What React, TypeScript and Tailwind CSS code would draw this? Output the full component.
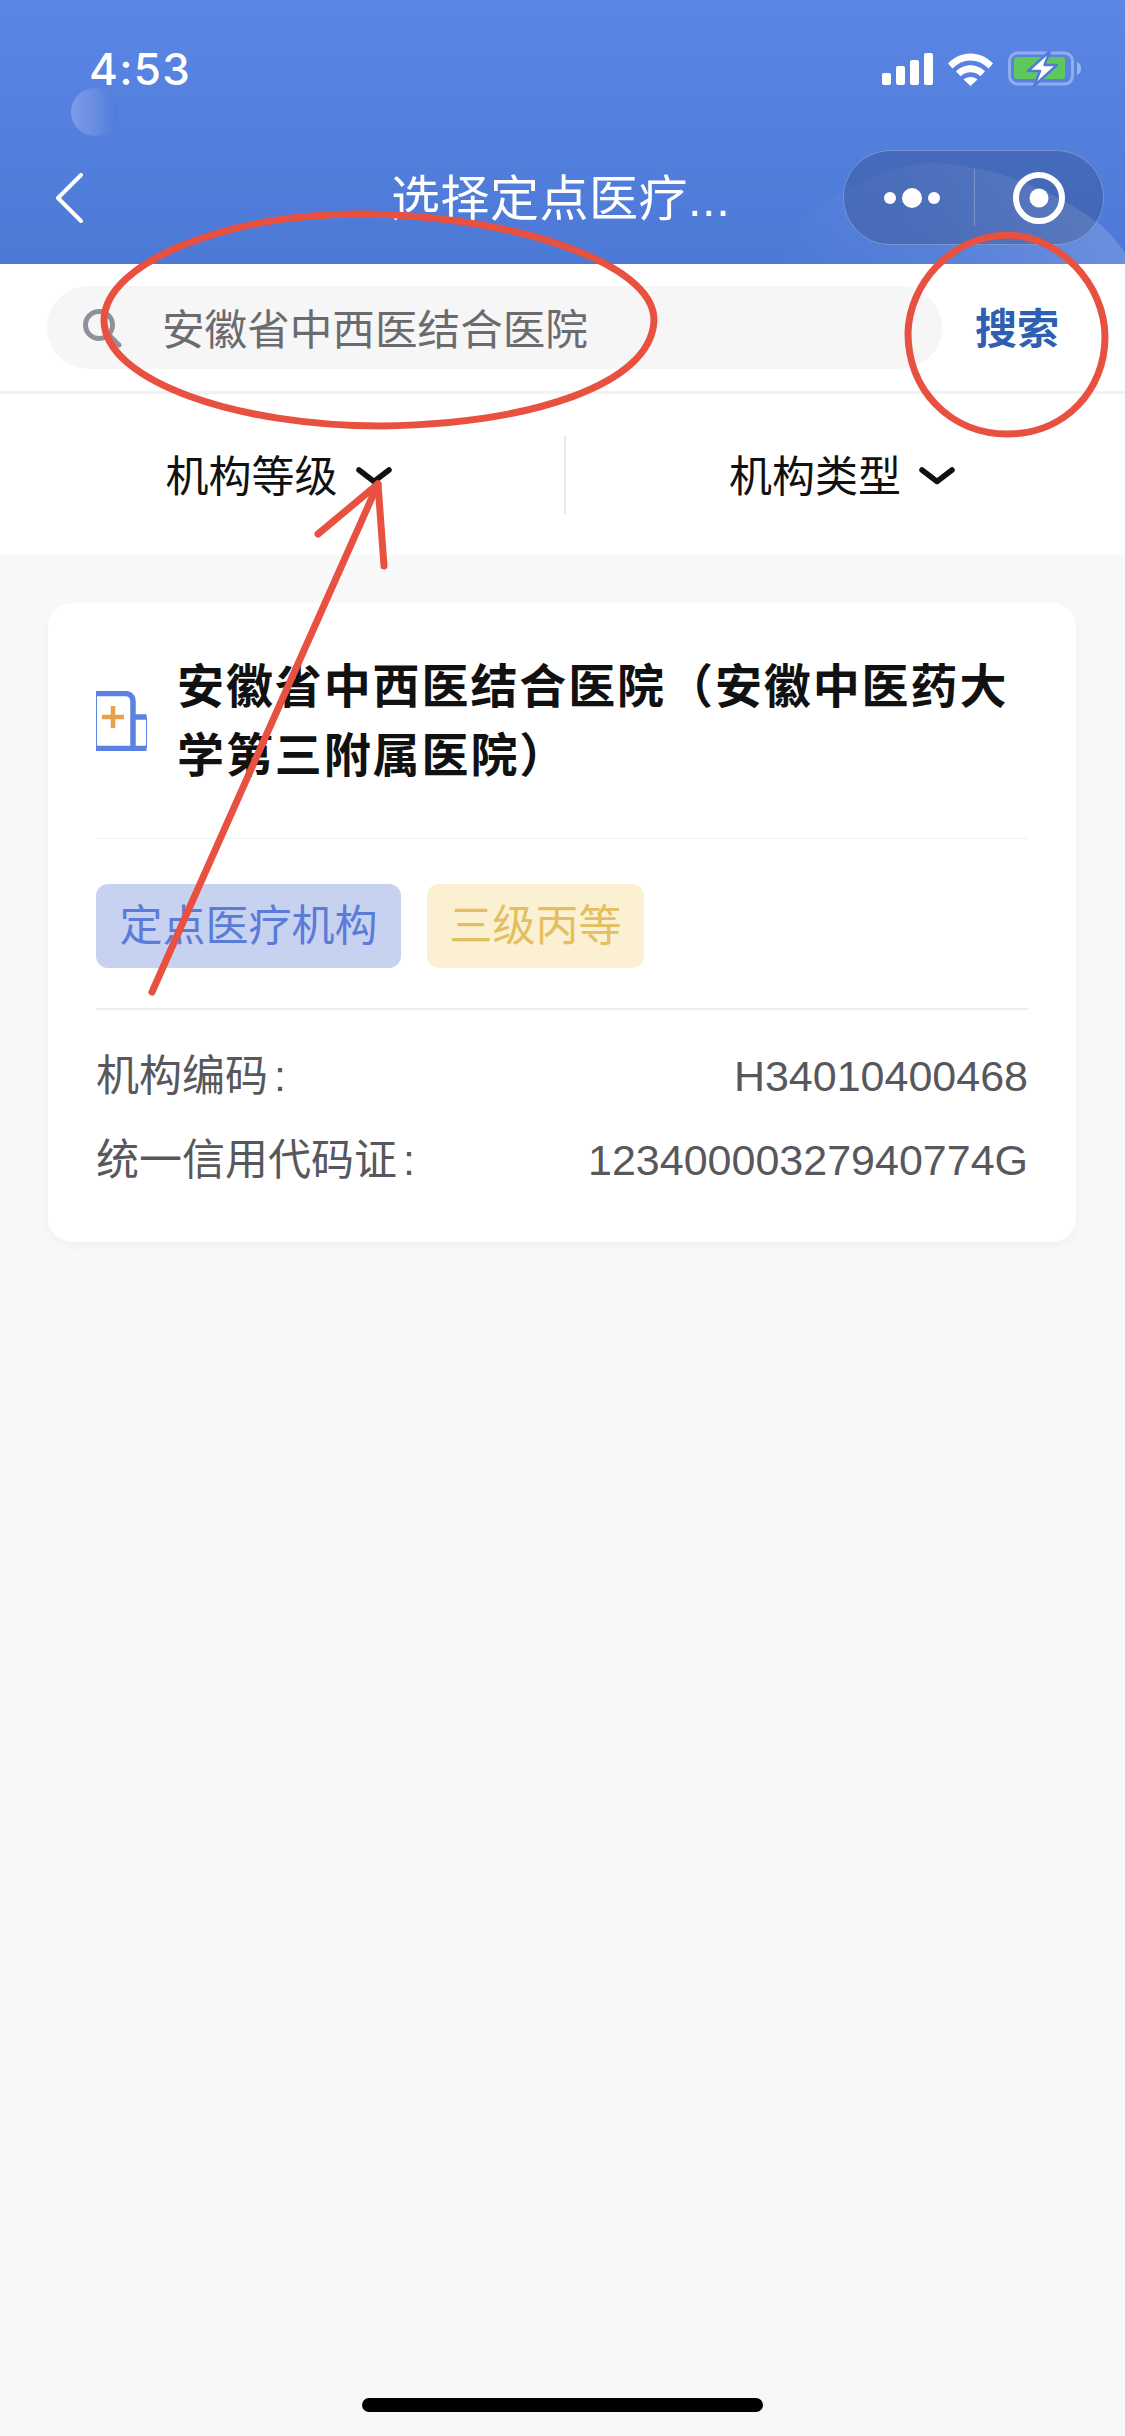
const cjk = "font-['Liberation_Sans','Noto_Sans_CJK_SC',sans-serif]";

const StatusIcons = () => (
  <div className="flex items-center">
    {/* signal */}
    <svg width="51" height="32" viewBox="0 0 51 32" fill="#fff">
      <rect x="0" y="20" width="9" height="12" rx="2" />
      <rect x="14" y="13" width="9" height="19" rx="2" />
      <rect x="28" y="7" width="9" height="25" rx="2" />
      <rect x="42" y="0" width="9" height="32" rx="2" />
    </svg>
    {/* wifi */}
    <svg className="ml-[15px]" width="45" height="33" viewBox="0 0 45 33" fill="#fff">
      <path d="M0 10.5C6 4 14 0.5 22.5 0.5S39 4 45 10.5L40.5 15.5C35.5 10.3 29.3 7.4 22.5 7.4S9.5 10.3 4.500 15.500Z" />
      <path d="M8 18.500C11.800 14.600 17 12.300 22.500 12.300S33.200 14.600 37 18.500L32.400 23.300C29.700 20.700 26.300 19.200 22.500 19.200S15.300 20.700 12.600 23.300Z" />
      <path d="M15.500 26.500C17.400 24.800 19.800 23.900 22.500 23.900S27.600 24.800 29.500 26.500L22.500 33Z" />
    </svg>
    {/* battery */}
    <svg className="ml-[15px]" width="74" height="36" viewBox="0 0 74 36">
      <rect x="1.500" y="2" width="63" height="31" rx="8" fill="none" stroke="#fff" strokeOpacity="0.35" strokeWidth="3" />
      <rect x="6" y="6" width="51" height="22" rx="3" fill="#5fc85c" />
      <path d="M69 11C72 12 73 14.500 73 17.500S72 23 69 24Z" fill="#fff" fillOpacity="0.4" />
      <path d="M42 0L20 20H32L26 35L49 14H36.500Z" fill="#fff" stroke="#4f7bdb" strokeWidth="2.500" strokeLinejoin="round" />
    </svg>
  </div>
);

const CapsuleMenu = () => (
  <div className="ml-auto flex h-[95px] w-[261px] items-center rounded-full border border-white/25 bg-black/15">
    <div className="flex w-[130px] items-center justify-end gap-[6px] pr-[34px]">
      <span className="h-[12px] w-[12px] rounded-full bg-white" />
      <span className="h-[20px] w-[20px] rounded-full bg-white" />
      <span className="h-[12px] w-[12px] rounded-full bg-white" />
    </div>
    <div className="h-[57px] w-px bg-white/25" />
    <div className="flex flex-1 justify-center">
      <svg width="52" height="52" viewBox="0 0 52 52">
        <circle cx="26" cy="26" r="23" fill="none" stroke="#fff" strokeWidth="6" />
        <circle cx="26" cy="26" r="9.500" fill="#fff" />
      </svg>
    </div>
  </div>
);

const Header = () => (
  <header className="relative h-[264px] overflow-hidden bg-gradient-to-b from-[#5b86e5] to-[#4c78d6]">
    {/* wave behind the capsule */}
    <svg className="absolute inset-0" width="1125" height="264" viewBox="0 0 1125 264">
      <defs>
        <linearGradient id="wave" x1="0" y1="0" x2="1" y2="0">
          <stop offset="0" stopColor="#fff" stopOpacity="0" />
          <stop offset="0.5" stopColor="#fff" stopOpacity="0.06" />
          <stop offset="1" stopColor="#fff" stopOpacity="0.17" />
        </linearGradient>
      </defs>
      <path d="M755 264C800 215 870 165 930 163C1000 165 1060 195 1097 222C1110 233 1118 243 1125 253V264Z" fill="url(#wave)" />
    </svg>
    <div className="relative flex items-center justify-between pl-[89px] pr-[43px] pt-[46px]">
      <span className="font-['Inter',sans-serif] text-[44px] leading-[46px] font-medium tracking-[1.300px] text-white">4:53</span>
      <StatusIcons />
    </div>
    <div className="relative mt-[58px] flex items-center pl-[55px] pr-[21px]">
      <svg width="28" height="50" viewBox="0 0 28 50" fill="none" stroke="#fff" strokeWidth="4" strokeLinecap="round" strokeLinejoin="round">
        <path d="M26 2L3 25L26 48" />
      </svg>
      <span className={`${cjk} ml-[308px] pt-[2px] text-[49px] leading-[60px] tracking-[0.5px] text-white`}>选择定点医疗...</span>
      <CapsuleMenu />
    </div>
  </header>
);

const SearchBar = () => (
  <div className="flex h-[130px] items-center border-b-[3px] border-[#f2f2f4] bg-white pl-[47px]">
    <div className="flex h-[83px] w-[895px] items-center rounded-full bg-[#f6f6f6] pl-[35px]">
      <svg width="40" height="40" viewBox="0 0 40 40" fill="none" stroke="#8f9099" strokeWidth="5" strokeLinecap="round">
        <circle cx="17" cy="17" r="13.500" />
        <path d="M27 27L37 37" />
      </svg>
      <span className={`${cjk} ml-[40px] pt-[4px] text-[42.6px] leading-[60px] text-[#6b6b6f]`}>安徽省中西医结合医院</span>
    </div>
    <span className={`${cjk} ml-[33px] pt-[4px] text-[42px] leading-[60px] font-bold text-[#2f5fb3]`}>搜索</span>
  </div>
);

const Filter = ({ label, className }: { label: string; className: string }) => (
  <div className={`flex items-center justify-center gap-[18px] pr-[7px] ${className}`}>
    <span className={`${cjk} pt-[4px] text-[43px] leading-[56px] text-[#111]`}>{label}</span>
    <svg className="mt-[2px]" width="36" height="18" viewBox="0 0 36 18" fill="none" stroke="#111" strokeWidth="5.500" strokeLinecap="round" strokeLinejoin="round">
      <path d="M3 3L18 14.500L33 3" />
    </svg>
  </div>
);

const FilterBar = () => (
  <div className="flex h-[161px] items-center bg-white">
    <Filter label="机构等级" className="w-[564px]" />
    <div className="h-[78px] w-[2px] bg-[#e8e8ea]" />
    <Filter label="机构类型" className="flex-1" />
  </div>
);

const HospitalIcon = () => (
  <svg className="shrink-0" width="51" height="60" viewBox="0 0 51 60" fill="none">
    <path d="M0 2.500H29C34 2.500 37 5.500 37 10.500V57.500H0" stroke="#5b82e3" strokeWidth="5.500" />
    <path d="M0.500 2V58" stroke="#5b82e3" strokeWidth="1" />
    <path d="M37 26H50.500M37 57.500H50.500" stroke="#5b82e3" strokeWidth="5.500" />
    <path d="M50.500 26V57" stroke="#5b82e3" strokeWidth="1" />
    <path d="M17 15V37M6 26H28" stroke="#e9a04d" strokeWidth="4.500" />
  </svg>
);

const InfoRow = ({ label, value }: { label: string; value: string }) => (
  <div className={`${cjk} flex h-[84px] items-center justify-between text-[43px] text-[#58585c]`}>
    <span>
      {label}
      <span className="ml-[6px]">:</span>
    </span>
    <span>{value}</span>
  </div>
);

const Annotations = () => (
  <svg className="pointer-events-none absolute inset-0" width="1125" height="2436" viewBox="0 0 1125 2436" fill="none" stroke="#e8503f" strokeWidth="7" strokeLinecap="round" strokeLinejoin="round">
    <path d="M366 214C230 212 105 262 104 320C104 382 240 426 380 426C530 424 652 385 654 320C654 262 510 216 366 214Z" />
    <path d="M1008 235C950 236 909 285 908 333C908 390 950 434 1008 434C1065 434 1105 390 1105 337C1105 285 1060 236 1008 235Z" />
    <path d="M152 992L378 484" />
    <path d="M318 534L378 484L384 566" />
  </svg>
);

export default function App() {
  return (
    <div className="relative flex min-h-[2436px] w-[1125px] flex-col overflow-hidden bg-[#f8f8f8]">
      <Header />
      <SearchBar />
      <FilterBar />

      {/* Card */}
      <section className="mt-[48px] ml-[48px] w-[1028px] rounded-[24px] bg-white px-[48px] pt-[49px] pb-[40px] shadow-[0_4px_12px_rgba(0,0,0,0.03)]">
        <div className="flex items-center gap-[30px] border-b border-[#f1f1f1] pb-[48px]">
          <HospitalIcon />
          <h1 className={`${cjk} text-[47px] leading-[69px] font-bold tracking-[1.900px] text-[#111]`}>
            安徽省中西医结合医院（安徽中医药大学第三附属医院）
          </h1>
        </div>
        <div className="flex gap-[26px] border-b-2 border-[#eeeeee] pt-[45px] pb-[40px]">
          <span className={`${cjk} flex h-[84px] w-[305px] items-center justify-center rounded-[12px] bg-[#c7d1f0] text-[43px] text-[#5b7bd8]`}>定点医疗机构</span>
          <span className={`${cjk} flex h-[84px] w-[217px] items-center justify-center rounded-[12px] bg-[#fbf0d2] text-[43px] text-[#e3bf5f]`}>三级丙等</span>
        </div>
        <div className="pt-[24px]">
          <InfoRow label="机构编码" value="H34010400468" />
          <InfoRow label="统一信用代码证" value="12340000327940774G" />
        </div>
      </section>

      <div className="mt-auto mb-[24px] h-[14px] w-[401px] self-center rounded-full bg-black" />

      {/* floating touch ball */}
      <div className="absolute top-[88px] left-[71px] h-[48px] w-[48px] rounded-full bg-gradient-to-r from-[#7f9de9] to-[#4f7bdb]" />
      <Annotations />
    </div>
  );
}
